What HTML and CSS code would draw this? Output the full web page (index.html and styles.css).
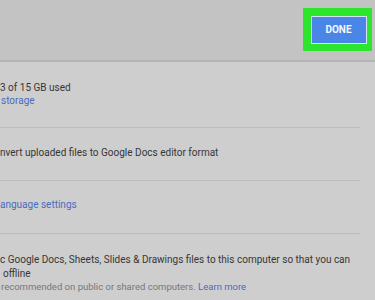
FILE: index.html
```html
<!DOCTYPE html>
<html lang="en">
<head>
    <meta charset="UTF-8">
    <meta name="viewport" content="width=device-width, initial-scale=1.0">
    <title>Settings</title>
    <link rel="stylesheet" href="styles.css">
</head>
<body>
    <div class="header">
        <div class="highlight">
            <button class="done-btn">DONE</button>
        </div>
    </div>
    <div class="settings">
        <div class="row row-storage">
            <div class="line">3 of 15 GB used</div>
            <a class="link line" href="#">storage</a>
        </div>
        <div class="row row-convert">
            <div class="line">nvert uploaded files to Google Docs editor format</div>
        </div>
        <div class="row row-language">
            <a class="link line" href="#">anguage settings</a>
        </div>
        <div class="row row-offline">
            <div class="line">c Google Docs, Sheets, Slides &amp; Drawings files to this computer so that you can</div>
            <div class="line indent">offline</div>
            <div class="line note">recommended on public or shared computers. <a class="link" href="#">Learn more</a></div>
        </div>
    </div>
</body>
</html>
```

FILE: styles.css
```css
body {
    margin: 0;
    font-family: Roboto, Arial, sans-serif;
    font-size: 10px;
    color: #363636;
    background-color: #cecece;
    overflow: hidden;
}
.header {
    height: 60px;
    background-color: #c3c3c3;
    border-bottom: 2px solid #b3b3b3;
    display: flex;
    justify-content: flex-end;
    align-items: flex-start;
}
.highlight {
    margin-top: 8px;
    margin-right: 3px;
    width: 69px;
    height: 43px;
    background-color: #2ee52e;
    display: flex;
    align-items: center;
    justify-content: center;
}
.done-btn {
    width: 56px;
    height: 28px;
    margin-left: 2px;
    background-color: #4a86e8;
    border: 1px solid #d6e4f6;
    color: #f4f7fc;
    font-family: Roboto, Arial, sans-serif;
    font-weight: bold;
    font-size: 10px;
    padding: 0;
}
.settings {
    width: 360px;
}
.row {
    border-bottom: 1px solid #bcbcbc;
    white-space: nowrap;
}
.line {
    display: block;
    line-height: 13.5px;
}
.link {
    color: #4a6cc0;
    text-decoration: none;
}
.note {
    color: #777;
    font-size: 9.5px;
    padding-left: 1px;
}
.indent {
    padding-left: 3px;
}
.row-storage {
    padding: 18.5px 0 19.5px;
}
.row-storage .link {
    padding-left: 1px;
}
.row-convert {
    padding: 17.5px 0 21px;
}
.row-language {
    padding: 17px 0 21.5px;
}
.row-offline {
    padding: 19px 0 10px;
    border-bottom: none;
}
```
